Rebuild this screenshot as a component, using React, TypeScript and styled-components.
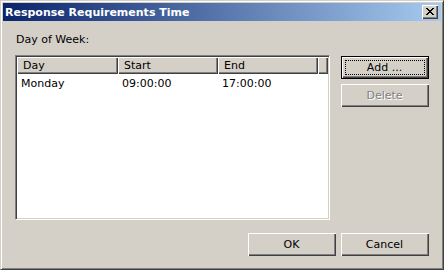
import React from "react";
import styled, { createGlobalStyle, css } from "styled-components";

const FACE = "#D4D0C8";
const SHADOW = "#808080";
const DARK = "#404040";

const Global = createGlobalStyle`
  html, body { margin: 0; padding: 0; background: ${FACE}; }
  body { font-family: "DejaVu Sans", Tahoma, sans-serif; font-size: 11px; color: #000; }
`;

const Window = styled.div`
  width: 444px;
  height: 270px;
  box-sizing: border-box;
  border: 1px solid;
  border-color: ${FACE} ${DARK} ${DARK} ${FACE};
  box-shadow: inset 1px 1px #fff, inset -1px -1px ${SHADOW};
  padding: 2px;
  background: ${FACE};
  display: flex;
  flex-direction: column;
`;

const TitleBar = styled.div`
  height: 18px;
  flex: none;
  background: linear-gradient(to right, #0a246a, #a6caf0);
  display: flex;
  align-items: center;
  padding: 0 3px 0 2px;
`;

const Title = styled.div`
  flex: 1;
  color: #fff;
  font-weight: bold;
  font-size: 11px;
  line-height: 13px;
  white-space: nowrap;
`;

const raised = css`
  background: ${FACE};
  box-shadow: inset 1px 1px #fff, inset -1px -1px ${DARK}, inset -2px -2px ${SHADOW};
`;

const CloseButton = styled.div`
  width: 16px;
  height: 14px;
  ${raised};
  display: flex;
  align-items: center;
  justify-content: center;
  padding: 0 1px 1px 0;
  box-sizing: border-box;
`;

const Client = styled.div`
  flex: 1;
  display: flex;
  flex-direction: column;
  padding: 12px 12px 11px 12px;
`;

const Label = styled.div`
  line-height: 13px;
  height: 13px;
  margin: 0 0 9px 0;
  padding-left: 1px;
`;

const MainRow = styled.div`
  display: flex;
  gap: 11px;
  height: 165px;
`;

const ListBox = styled.div`
  width: 315px;
  height: 165px;
  box-sizing: border-box;
  border: 1px solid;
  border-color: ${SHADOW} #fff #fff ${SHADOW};
  box-shadow: inset 1px 1px ${DARK}, inset -1px -1px ${FACE};
  padding: 1px;
  background: #fff;
  display: flex;
  flex-direction: column;
`;

const Header = styled.div`
  display: flex;
  height: 17px;
  flex: none;
`;

const HeaderCell = styled.div<{ $w?: number }>`
  ${raised};
  box-sizing: border-box;
  ${(p) => (p.$w ? `width: ${p.$w}px; flex: none;` : "flex: 1;")}
  padding: 2px 0 0 6px;
  line-height: 13px;
  white-space: nowrap;
`;

const Row = styled.div`
  display: flex;
  height: 16px;
`;

const Cell = styled.div<{ $w: number }>`
  width: ${(p) => p.$w}px;
  box-sizing: border-box;
  padding: 3px 0 0 4px;
  line-height: 13px;
  white-space: nowrap;
`;

const ButtonColumn = styled.div`
  display: flex;
  flex-direction: column;
  gap: 5px;
  padding-top: 1px;
`;

const Button = styled.div<{ $default?: boolean; $disabled?: boolean }>`
  position: relative;
  width: 88px;
  height: 23px;
  box-sizing: border-box;
  ${raised};
  display: flex;
  align-items: center;
  justify-content: center;
  line-height: 13px;
  padding: 0 1px 1px 0;
  ${(p) =>
    p.$default &&
    css`
      border: 1px solid #000;
      box-shadow: inset 1px 1px #fff, inset -1px -1px ${DARK}, inset -2px -2px ${SHADOW};
      &::after {
        content: "";
        position: absolute;
        left: 3px;
        top: 3px;
        right: 3px;
        bottom: 3px;
        border: 1px dotted #000;
      }
    `}
  ${(p) =>
    p.$disabled &&
    css`
      color: ${SHADOW};
      text-shadow: 1px 1px #fff;
    `}
`;

const Footer = styled.div`
  display: flex;
  justify-content: flex-end;
  gap: 5px;
  margin-top: 13px;
`;

const X_PATTERN = [
  "11000011",
  "01100110",
  "00111100",
  "00011000",
  "00111100",
  "01100110",
  "11000011",
];

const CloseGlyph = () => (
  <svg width="8" height="7" viewBox="0 0 8 7" shapeRendering="crispEdges">
    {X_PATTERN.flatMap((row, y) =>
      row.split("").map((c, x) =>
        c === "1" ? <rect key={`${x}-${y}`} x={x} y={y} width="1" height="1" fill="#000" /> : null
      )
    )}
  </svg>
);

const rows = [{ day: "Monday", start: "09:00:00", end: "17:00:00" }];

export default function App() {
  return (
    <>
      <Global />
      <Window>
        <TitleBar>
          <Title>Response Requirements Time</Title>
          <CloseButton>
            <CloseGlyph />
          </CloseButton>
        </TitleBar>
        <Client>
          <Label>Day of Week:</Label>
          <MainRow>
            <ListBox>
              <Header>
                <HeaderCell $w={101}>Day</HeaderCell>
                <HeaderCell $w={100}>Start</HeaderCell>
                <HeaderCell $w={100}>End</HeaderCell>
                <HeaderCell />
              </Header>
              {rows.map((r) => (
                <Row key={r.day}>
                  <Cell $w={101}>{r.day}</Cell>
                  <Cell $w={100}>{r.start}</Cell>
                  <Cell $w={100}>{r.end}</Cell>
                </Row>
              ))}
            </ListBox>
            <ButtonColumn>
              <Button $default>Add ...</Button>
              <Button $disabled>Delete</Button>
            </ButtonColumn>
          </MainRow>
          <Footer>
            <Button>OK</Button>
            <Button>Cancel</Button>
          </Footer>
        </Client>
      </Window>
    </>
  );
}
